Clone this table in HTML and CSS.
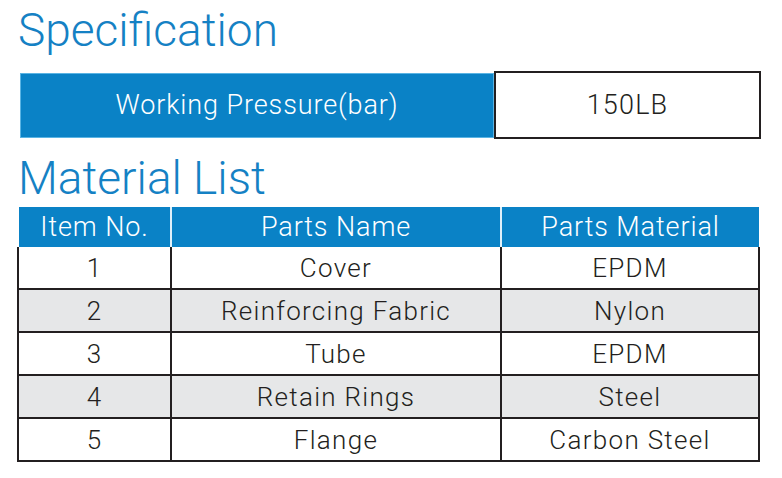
FILE: index.html
```html
<!DOCTYPE html>
<html>
<head>
<meta charset="utf-8">
<link rel="stylesheet" href="styles.css">
</head>
<body>
<div class="page">
  <h1 class="title title-spec">Specification</h1>
  <div class="spec">
    <div class="spec-label">Working Pressure(bar)</div>
    <div class="spec-value">150LB</div>
  </div>
  <h1 class="title title-mat">Material List</h1>
  <div class="thead">
    <div class="th">Item No.</div>
    <div class="th">Parts Name</div>
    <div class="th">Parts Material</div>
  </div>
  <div class="tbody">
    <div class="td">1</div><div class="td">Cover</div><div class="td">EPDM</div>
    <div class="td alt">2</div><div class="td alt">Reinforcing Fabric</div><div class="td alt">Nylon</div>
    <div class="td">3</div><div class="td">Tube</div><div class="td">EPDM</div>
    <div class="td alt">4</div><div class="td alt">Retain Rings</div><div class="td alt">Steel</div>
    <div class="td">5</div><div class="td">Flange</div><div class="td">Carbon Steel</div>
  </div>
</div>
</body>
</html>
```

FILE: styles.css
```css
html, body {
  margin: 0;
  padding: 0;
  background: #ffffff;
}
body {
  font-family: Roboto, "Liberation Sans", sans-serif;
  font-weight: 300;
  color: #231f20;
}
.page {
  width: 782px;
  height: 478px;
  padding-left: 17px;
  box-sizing: border-box;
  overflow: hidden;
}
.title {
  margin: 0;
  font-weight: 300;
  font-size: 46px;
  line-height: 47px;
  color: #1581c4;
  padding-left: 1px;
}
.title-spec {
  padding-top: 7px;
  height: 71px;
  box-sizing: border-box;
}
.title-mat {
  padding-top: 16px;
  margin-bottom: 5px;
}
.spec {
  display: flex;
  align-items: center;
  margin-left: 3px;
  height: 68px;
}
.spec-label {
  width: 474px;
  height: 65px;
  box-sizing: border-box;
  background: #0a82c6;
  border: 1px solid #5ab4e4;
  color: #ffffff;
  font-size: 27px;
  letter-spacing: 0.9px;
  display: flex;
  align-items: center;
  justify-content: center;
}
.spec-value {
  width: 267px;
  height: 68px;
  box-sizing: border-box;
  border: 2px solid #231f20;
  font-size: 27px;
  letter-spacing: 1.2px;
  display: flex;
  align-items: center;
  justify-content: center;
}
.thead {
  display: grid;
  grid-template-columns: 151px 328px 257px;
  column-gap: 2px;
  margin-left: 2px;
  height: 40px;
  background: #dff0fa;
  width: 740px;
}
.th {
  background: #0a82c6;
  color: #ffffff;
  font-size: 27px;
  letter-spacing: 0.9px;
  display: flex;
  align-items: center;
  justify-content: center;
}
.tbody {
  display: grid;
  grid-template-columns: 151px 328px 256px;
  grid-auto-rows: 41px;
  gap: 2px;
  width: 743px;
  box-sizing: border-box;
  background: #231f20;
  border: 2px solid #231f20;
  border-top: 0;
}
.td {
  background: #ffffff;
  font-size: 26px;
  letter-spacing: 1.3px;
  display: flex;
  align-items: center;
  justify-content: center;
}
.td.alt {
  background: #e6e7e8;
}
```
